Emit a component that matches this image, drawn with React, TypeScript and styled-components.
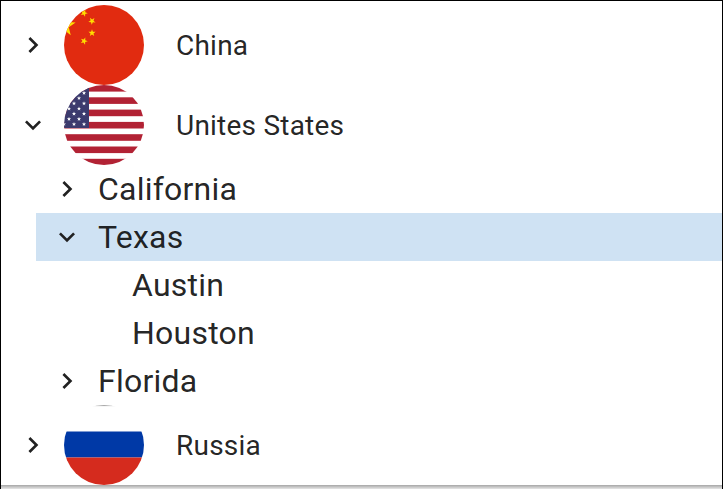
import styled, { createGlobalStyle } from "styled-components";

const Global = createGlobalStyle`
  html, body { margin: 0; padding: 0; background: #fff; }
  body { font-family: Roboto, "Liberation Sans", sans-serif; color: rgba(0, 0, 0, 0.87); letter-spacing: 0.014em; }
`;

const Frame = styled.div`
  box-sizing: border-box;
  width: 723px;
  height: 489px;
  border: 1px solid #000;
  border-bottom: 0;
  padding-top: 4px;
  overflow: hidden;
  background: linear-gradient(to bottom, #a6a6a6, #e6e6e6) no-repeat bottom / 100% 4px;
`;

const Row = styled.div<{ $selected?: boolean; $flag?: boolean }>`
  display: flex;
  align-items: center;
  height: ${({ $flag }) => ($flag ? 80 : 48)}px;
  padding-left: ${({ $flag }) => ($flag ? 16 : 15)}px;
  background: ${({ $selected }) => ($selected ? "#cfe2f3" : "#fff")};
`;

const Slot = styled.span`
  width: 32px;
  height: 32px;
  flex: none;
  color: #212121;
`;

const Group = styled.div`
  margin-left: 35px;
`;

const Flag = styled.svg`
  width: 80px;
  height: 80px;
  margin-left: 15px;
  flex: none;
`;

const CountryLabel = styled.span`
  margin-left: 32px;
  font-size: 28px;
`;

const StateLabel = styled.span`
  margin-left: 15px;
  font-size: 32px;
`;

const CityRow = styled.div`
  display: flex;
  align-items: center;
  height: 48px;
  padding-left: 96px;
  background: #fff;
  font-size: 32px;
`;

function Chevron({ open }: { open?: boolean }) {
  return (
    <Slot>
      <svg viewBox="0 0 24 24" width="32" height="32" fill="currentColor">
        <path d={open ? "M16.59 8.59 12 13.17 7.41 8.59 6 10l6 6 6-6z" : "M10 6 8.59 7.41 13.17 12l-4.58 4.59L10 18l6-6z"} />
      </svg>
    </Slot>
  );
}

function Star({ x, y, r, rot = 0, fill = "#ffde00" }: { x: number; y: number; r: number; rot?: number; fill?: string }) {
  const pts = Array.from({ length: 10 }, (_, i) => {
    const a = ((i * 36 - 90 + rot) * Math.PI) / 180;
    const d = i % 2 ? r * 0.4 : r;
    return `${x + d * Math.cos(a)},${y + d * Math.sin(a)}`;
  }).join(" ");
  return <polygon points={pts} fill={fill} />;
}

function China() {
  return (
    <Flag viewBox="0 0 80 80">
      <circle cx="40" cy="40" r="40" fill="#e12b10" />
      <clipPath id="cn">
        <circle cx="40" cy="40" r="40" />
      </clipPath>
      <g clipPath="url(#cn)">
        <Star x={0.5} y={20.5} r={11.5} rot={75} />
        <Star x={20} y={8} r={3.8} rot={20} />
        <Star x={28} y={16} r={3.8} rot={40} />
        <Star x={28} y={28} r={3.8} />
        <Star x={20} y={36} r={3.8} rot={20} />
      </g>
    </Flag>
  );
}

function Usa() {
  const stripes = [0, 12.3, 24.6, 36.9, 49.2, 61.5, 73.8];
  const stars: [number, number][] = [];
  for (let r = 0; r < 7; r++) {
    for (let c = 0; c < 3; c++) {
      stars.push([20 - c * 10 - (r % 2 ? 5 : 0), 8 + r * 5.2]);
    }
  }
  return (
    <Flag viewBox="0 0 80 80">
      <clipPath id="us">
        <circle cx="40" cy="40" r="40" />
      </clipPath>
      <g clipPath="url(#us)">
        <rect width="80" height="80" fill="#fff" />
        {stripes.map((y) => (
          <rect key={y} y={y} width="80" height="6.6" fill="#b22234" />
        ))}
        <rect width="25" height="43" fill="#3c3b6e" />
        {stars.map(([x, y]) => (
          <Star key={`${x}-${y}`} x={x} y={y} r={2.2} fill="#fff" />
        ))}
      </g>
    </Flag>
  );
}

function Russia() {
  return (
    <Flag viewBox="0 0 80 80">
      <clipPath id="ru">
        <circle cx="40" cy="40" r="40" />
      </clipPath>
      <g clipPath="url(#ru)">
        <rect width="80" height="27" fill="#fff" />
        <rect width="80" height="1.1" fill="#a8a8a8" />
        <rect y="26.5" width="80" height="26" fill="#0039a6" />
        <rect y="52.5" width="80" height="27.5" fill="#d52b1e" />
      </g>
    </Flag>
  );
}

export default function App() {
  return (
    <>
      <Global />
      <Frame>
        <Row $flag>
          <Chevron />
          <China />
          <CountryLabel>China</CountryLabel>
        </Row>
        <Row $flag>
          <Chevron open />
          <Usa />
          <CountryLabel>Unites States</CountryLabel>
        </Row>
        <Group>
          <Row>
            <Chevron />
            <StateLabel>California</StateLabel>
          </Row>
          <Row $selected>
            <Chevron open />
            <StateLabel>Texas</StateLabel>
          </Row>
          <CityRow>Austin</CityRow>
          <CityRow>Houston</CityRow>
          <Row>
            <Chevron />
            <StateLabel>Florida</StateLabel>
          </Row>
        </Group>
        <Row $flag>
          <Chevron />
          <Russia />
          <CountryLabel>Russia</CountryLabel>
        </Row>
      </Frame>
    </>
  );
}
